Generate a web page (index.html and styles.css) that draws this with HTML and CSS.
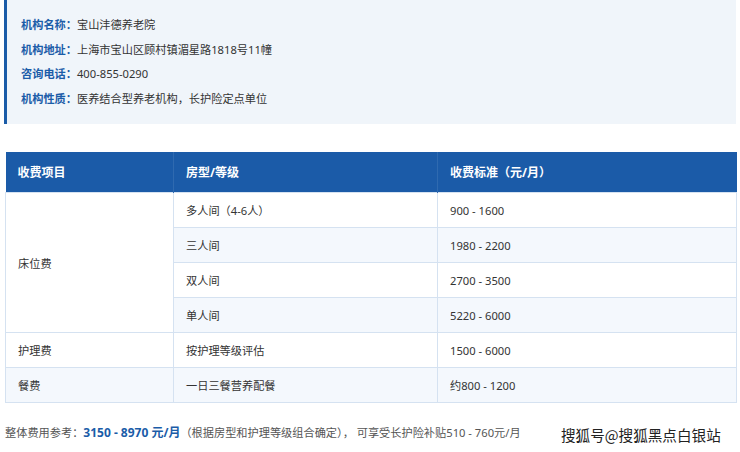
FILE: index.html
```html
<!DOCTYPE html>
<html lang="zh-CN">
<head>
<meta charset="utf-8">
<link rel="stylesheet" href="styles.css">
</head>
<body>
<div class="page">
  <div class="info">
    <p class="line"><span class="lab">机构名称：</span>宝山沣德养老院</p>
    <p class="line"><span class="lab">机构地址：</span>上海市宝山区顾村镇湄星路1818号11幢</p>
    <p class="line"><span class="lab">咨询电话：</span>400-855-0290</p>
    <p class="line"><span class="lab">机构性质：</span>医养结合型养老机构，长护险定点单位</p>
  </div>
  <table class="fees">
    <colgroup><col class="c1"><col class="c2"><col class="c3"></colgroup>
    <thead>
      <tr><th>收费项目</th><th>房型/等级</th><th>收费标准（元/月）</th></tr>
    </thead>
    <tbody>
      <tr><td rowspan="4" class="cat">床位费</td><td>多人间（4-6人）</td><td>900 - 1600</td></tr>
      <tr class="alt"><td>三人间</td><td>1980 - 2200</td></tr>
      <tr><td>双人间</td><td>2700 - 3500</td></tr>
      <tr class="alt"><td>单人间</td><td>5220 - 6000</td></tr>
      <tr><td>护理费</td><td>按护理等级评估</td><td>1500 - 6000</td></tr>
      <tr class="alt"><td>餐费</td><td>一日三餐营养配餐</td><td>约800 - 1200</td></tr>
    </tbody>
  </table>
  <p class="note">整体费用参考：<b class="hl">3150 - 8970 元/月</b>（根据房型和护理等级组合确定）， 可享受长护险补贴510 - 760元/月</p>
  <div class="mark">搜狐号@搜狐黑点白银站</div>
</div>
</body>
</html>
```
FILE: styles.css
```css
html, body { margin: 0; padding: 0; background: #fff; }
body {
  font-family: "Noto Sans", "Noto Sans CJK SC", sans-serif;
  color: #333;
  width: 740px;
  height: 452px;
  overflow: hidden;
}
.page { position: relative; height: 452px; }
.info {
  margin: 0 4px 0 4px;
  background: #f0f5fa;
  border-left: 3px solid #1b5ca8;
  padding: 13px 0 13px 14px;
}
.line {
  margin: 0;
  font-size: 11.2px;
  line-height: 24.5px;
  color: #333;
}
.lab { color: #1b5ca8; font-weight: 700; }
.fees {
  margin: 28px 0 0 5px;
  width: 731px;
  border-collapse: collapse;
  table-layout: fixed;
  font-size: 11.2px;
}
.c1 { width: 168px; }
.c2 { width: 264px; }
.c3 { width: 299px; }
.fees th {
  background: #1b5ba8;
  color: #fff;
  font-weight: 700;
  font-size: 12px;
  text-align: left;
  height: 40px;
  padding: 0 0 0 12px;
  border-left: 1px solid #2f6ab0;
}
.fees th:first-child { border-left: 0; }
.fees td {
  height: 34px;
  padding: 0 0 0 12px;
  border: 1px solid #d5e2f1;
  color: #333;
  background: #fff;
}
.fees tr.alt td { background: #f4f8fd; }
.fees tr.alt td.cat { background: #fff; }
.note {
  margin: 20px 0 0 5px;
  font-size: 11.2px;
  color: #555;
}
.hl { color: #1b5ca8; font-weight: 700; font-size: 12px; }
.mark {
  position: absolute;
  left: 561px;
  top: 424px;
  font-size: 14.6px;
  color: #222;
  text-shadow: 1px 1px 0 #fff, -1px -1px 0 #fff, 1px -1px 0 #fff, -1px 1px 0 #fff;
  font-family: "Noto Sans CJK SC", sans-serif;
}
```
